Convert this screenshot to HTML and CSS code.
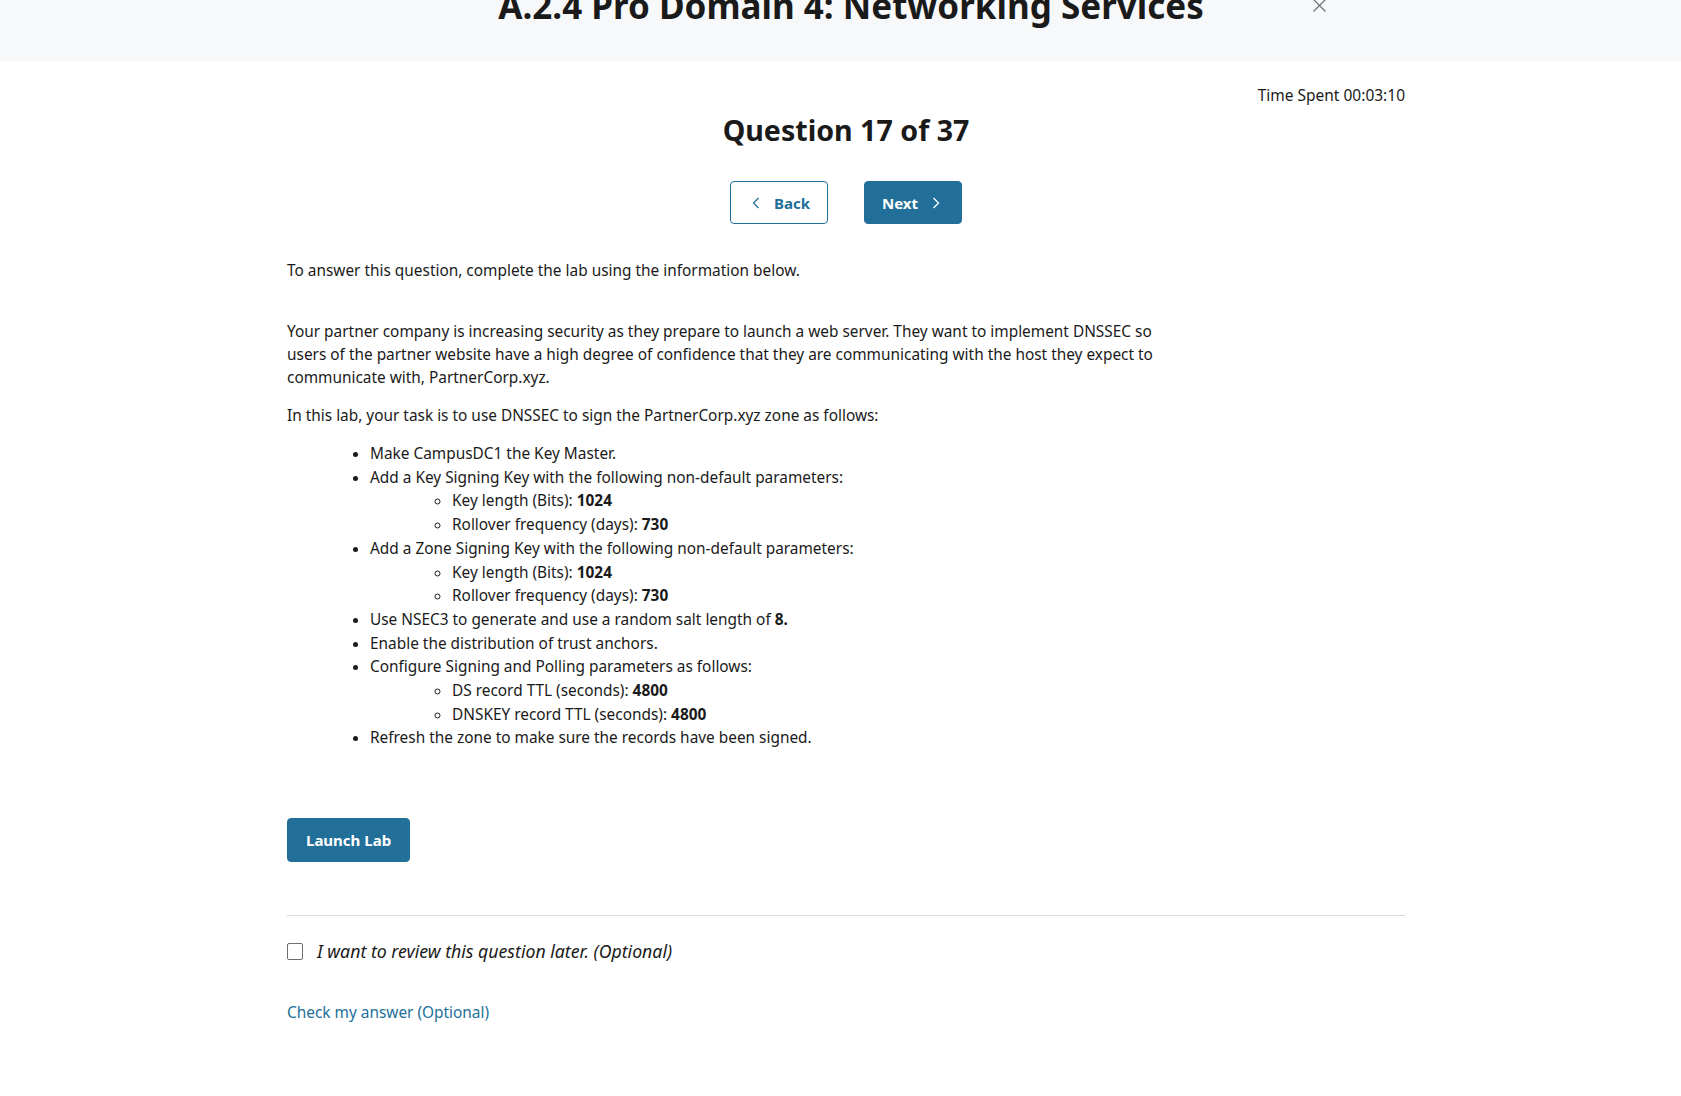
FILE: index.html
```html
<!DOCTYPE html>
<html lang="en">
<head>
<meta charset="utf-8">
<title>Question 17 of 37</title>
<link rel="stylesheet" href="styles.css">
</head>
<body>
<header class="topbar">
  <div class="topbar-inner">
    <span class="topbar-spacer"></span>
    <h1 class="topbar-title">A.2.4 Pro Domain 4: Networking Services</h1>
    <button class="close-btn" aria-label="Close">
      <svg width="13" height="13" viewBox="0 0 13 13"><path d="M0.5 0.5 L12.5 12.5 M12.5 0.5 L0.5 12.5" stroke="#6b6f73" stroke-width="1.2" fill="none"/></svg>
    </button>
  </div>
</header>
<main class="main">
  <div class="timer">Time Spent 00:03:10</div>
  <h2 class="q-title">Question 17 of 37</h2>
  <div class="nav">
    <button class="btn btn-outline">
      <svg class="chev" width="16" height="16" viewBox="0 0 16 16"><path d="M10.5 3 L5.5 8 L10.5 13" stroke="currentColor" stroke-width="1.3" fill="none"/></svg>
      <span>Back</span>
    </button>
    <button class="btn btn-primary">
      <span>Next</span>
      <svg class="chev" width="16" height="16" viewBox="0 0 16 16"><path d="M5.5 3 L10.5 8 L5.5 13" stroke="currentColor" stroke-width="1.3" fill="none"/></svg>
    </button>
  </div>
  <p class="intro">To answer this question, complete the lab using the information below.</p>
  <div class="desc">
    <p>Your partner company is increasing security as they prepare to launch a web server. They want to implement DNSSEC so users of the partner website have a high degree of confidence that they are communicating with the host they expect to communicate with, PartnerCorp.xyz.</p>
    <p>In this lab, your task is to use DNSSEC to sign the PartnerCorp.xyz zone as follows:</p>
    <ul class="tasks">
      <li>Make CampusDC1 the Key Master.</li>
      <li>Add a Key Signing Key with the following non-default parameters:
        <ul class="sub">
          <li>Key length (Bits): <b>1024</b></li>
          <li>Rollover frequency (days): <b>730</b></li>
        </ul>
      </li>
      <li>Add a Zone Signing Key with the following non-default parameters:
        <ul class="sub">
          <li>Key length (Bits): <b>1024</b></li>
          <li>Rollover frequency (days): <b>730</b></li>
        </ul>
      </li>
      <li>Use NSEC3 to generate and use a random salt length of <b>8.</b></li>
      <li>Enable the distribution of trust anchors.</li>
      <li>Configure Signing and Polling parameters as follows:
        <ul class="sub">
          <li>DS record TTL (seconds): <b>4800</b></li>
          <li>DNSKEY record TTL (seconds): <b>4800</b></li>
        </ul>
      </li>
      <li>Refresh the zone to make sure the records have been signed.</li>
    </ul>
  </div>
  <button class="btn btn-primary launch">Launch Lab</button>
  <hr class="divider">
  <label class="review">
    <span class="box"></span>
    <span class="review-text">I want to review this question later. (Optional)</span>
  </label>
  <a class="check" href="#">Check my answer (Optional)</a>
</main>
</body>
</html>
```
FILE: styles.css
```css
* { box-sizing: border-box; }
html, body { margin: 0; padding: 0; background: #fff; }
body {
  font-family: "Noto Sans", "Open Sans", sans-serif;
  color: #1a1a1a;
  font-size: 15.4px;
}
.topbar {
  height: 61px;
  background: #f7f8fa;
  overflow: hidden;
}
.topbar-inner {
  width: 1128px;
  margin-left: 287px;
  display: grid;
  grid-template-columns: 1fr auto 1fr;
  align-items: start;
}
.topbar-title {
  margin: -14px 0 0 0;
  font-size: 35px;
  line-height: 40px;
  font-weight: 700;
  color: #1a1a1a;
  white-space: nowrap;
}
.close-btn {
  justify-self: end;
  margin: -1px 89px 0 0;
  padding: 0;
  border: 0;
  background: none;
  width: 13px;
  height: 13px;
  display: block;
}
.close-btn svg { display: block; }
.main {
  width: 1118px;
  margin-left: 287px;
  padding-top: 24px;
  display: flex;
  flex-direction: column;
  align-items: flex-start;
}
.timer {
  align-self: stretch;
  text-align: right;
  font-size: 15.5px;
  line-height: 20px;
}
.q-title {
  align-self: stretch;
  text-align: center;
  margin: 7px 0 0 0;
  font-size: 28.6px;
  line-height: 36px;
  font-weight: 700;
}
.nav {
  align-self: stretch;
  display: flex;
  justify-content: center;
  gap: 36px;
  margin-top: 33px;
}
.btn {
  font-family: inherit;
  font-size: 15px;
  font-weight: 700;
  height: 43px;
  border-radius: 4px;
  padding: 0 19px;
  display: inline-flex;
  align-items: center;
  justify-content: center;
  gap: 10px;
  cursor: pointer;
}
.btn-outline {
  background: #fff;
  color: #22709a;
  border: 1px solid #22709a;
  width: 98px;
}
.btn-primary {
  background: #22709a;
  color: #fff;
  border: 1px solid #22709a;
}
.nav .btn-primary { width: 98px; }
.chev { display: block; flex: none; }
.intro {
  margin: 35px 0 0 0;
  line-height: 23px;
}
.desc {
  margin-top: 38px;
  max-width: 880px;
}
.desc p {
  margin: 0 0 15px 0;
  line-height: 23px;
}
.tasks {
  margin: 1px 0 0 0;
  padding-left: 83px;
  list-style: disc;
}
.tasks li { line-height: 23.7px; }
.sub {
  margin: 0;
  padding-left: 82px;
  list-style: circle;
}
.tasks b { font-weight: 700; }
.launch {
  margin-top: 68px;
  height: 44px;
  padding: 0 18px;
}
.divider {
  align-self: stretch;
  margin: 53px 0 0 0;
  border: 0;
  border-top: 1px solid #d6d9dd;
  height: 0;
}
.review {
  margin-top: 22px;
  display: flex;
  align-items: center;
  gap: 14px;
}
.box {
  width: 16px;
  height: 17px;
  border: 1px solid #6e6e6e;
  border-radius: 2px;
  background: #fff;
  flex: none;
}
.review-text {
  font-style: italic;
  font-size: 17.7px;
  line-height: 26px;
}
.check {
  margin-top: 37px;
  color: #22709a;
  text-decoration: none;
  line-height: 23px;
}
```
